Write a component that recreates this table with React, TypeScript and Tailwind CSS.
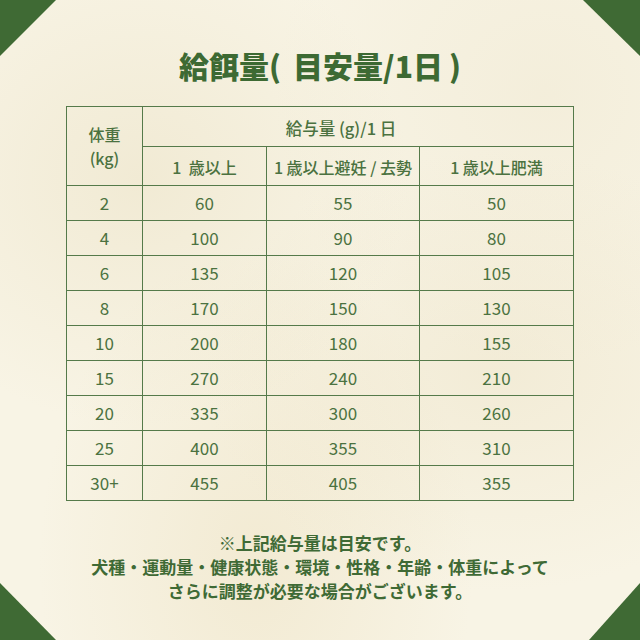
import React from "react";

const rows: [string, number, number, number][] = [
  ["2", 60, 55, 50],
  ["4", 100, 90, 80],
  ["6", 135, 120, 105],
  ["8", 170, 150, 130],
  ["10", 200, 180, 155],
  ["15", 270, 240, 210],
  ["20", 335, 300, 260],
  ["25", 400, 355, 310],
  ["30+", 455, 405, 355],
];

const cell = "border border-[#557a4a] text-center align-middle p-0";

export default function App() {
  return (
    <div
      className="relative w-[640px] h-[640px] overflow-hidden bg-[#f8f4e5] bg-[radial-gradient(ellipse_at_22%_28%,rgba(228,216,180,0.35),transparent_38%),radial-gradient(ellipse_at_78%_58%,rgba(228,214,176,0.28),transparent_42%),radial-gradient(ellipse_at_40%_88%,rgba(230,214,172,0.32),transparent_40%),radial-gradient(ellipse_at_85%_15%,rgba(232,222,192,0.28),transparent_35%)]"
      style={{ fontFamily: '"Noto Sans CJK JP", "Noto Sans", sans-serif' }}
    >
      {/* corner triangles */}
      <div className="absolute left-0 top-0 w-[56px] h-[56px] bg-[#3f6a34] [clip-path:polygon(0_0,100%_0,0_100%)]" />
      <div className="absolute right-0 top-0 w-[57px] h-[56px] bg-[#3f6a34] [clip-path:polygon(0_0,100%_0,100%_100%)]" />
      <div className="absolute left-0 bottom-0 w-[56px] h-[57px] bg-[#3f6a34] [clip-path:polygon(0_0,100%_100%,0_100%)]" />
      <div className="absolute right-0 bottom-0 w-[51px] h-[57px] bg-[#3f6a34] [clip-path:polygon(100%_0,100%_100%,0_100%)]" />

      <div className="relative flex flex-col items-center pt-[46px]">
        <h1 className="text-[30px] leading-[38px] font-black text-[#3d6a33]">
          給餌量<span className="mr-[12px]">(</span>目安量/1日<span className="ml-[6px]">)</span>
        </h1>

        <table className="mt-[22px] w-[507px] table-fixed border-collapse text-[#4b7240] text-[17px]">
          <colgroup>
            <col className="w-[76px]" />
            <col className="w-[124px]" />
            <col className="w-[153px]" />
            <col className="w-[154px]" />
          </colgroup>
          <thead>
            <tr className="h-[40px]">
              <th rowSpan={2} className={`${cell} font-medium text-[16px] leading-[24px]`}>
                体重
                <br />
                (kg)
              </th>
              <th colSpan={3} className={`${cell} font-medium text-[16.5px] pt-[4px] pr-[34px]`}>
                給与量 (g)/1 日
              </th>
            </tr>
            <tr className="h-[39px]">
              <th className={`${cell} font-medium text-[16px] pt-[2px]`}>1&nbsp; 歳以上</th>
              <th className={`${cell} font-medium text-[16px] pt-[2px]`}>1 歳以上避妊 / 去勢</th>
              <th className={`${cell} font-medium text-[16px] pt-[2px]`}>1 歳以上肥満</th>
            </tr>
          </thead>
          <tbody>
            {rows.map(([kg, a, b, c]) => (
              <tr key={kg} className="h-[35px]">
                <td className={cell}>{kg}</td>
                <td className={cell}>{a}</td>
                <td className={cell}>{b}</td>
                <td className={cell}>{c}</td>
              </tr>
            ))}
          </tbody>
        </table>

        <div className="mt-[30px] text-center text-[17px] leading-[24px] font-bold text-[#3f6a35]">
          <p>※上記給与量は目安です。</p>
          <p>犬種・運動量・健康状態・環境・性格・年齢・体重によって</p>
          <p>さらに調整が必要な場合がございます。</p>
        </div>
      </div>
    </div>
  );
}
